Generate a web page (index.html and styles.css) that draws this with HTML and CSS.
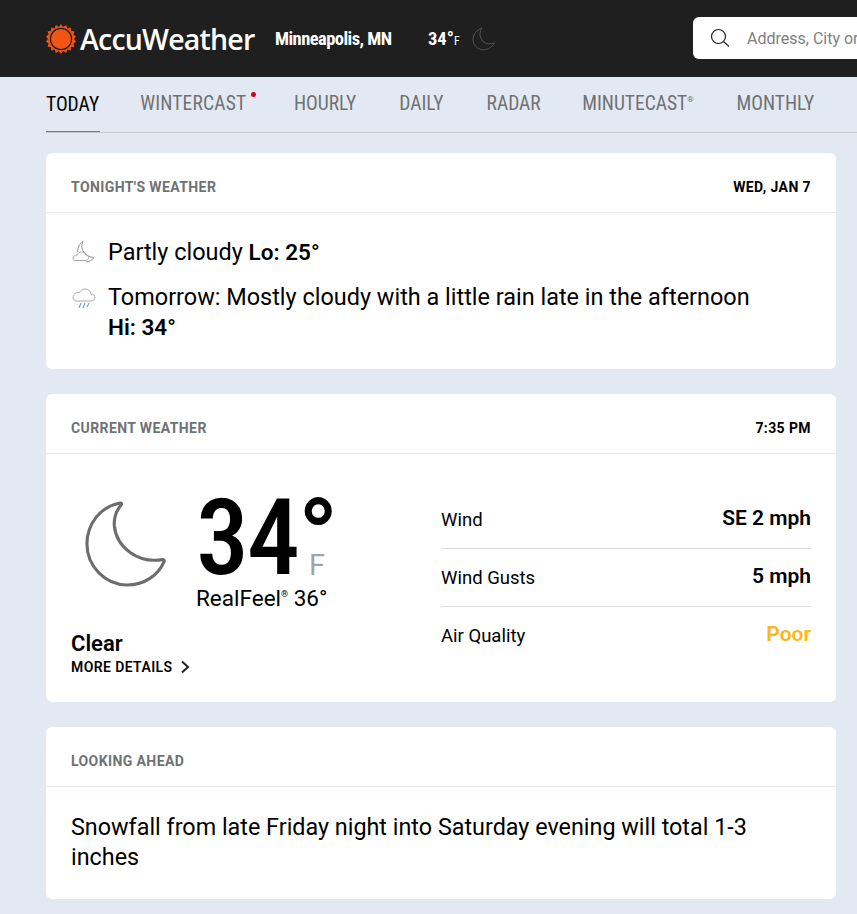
FILE: index.html
```html
<!DOCTYPE html>
<html>

<head>
    <meta charset="utf-8">
    <title>AccuWeather</title>
    <link rel="stylesheet" href="styles.css">
</head>

<body>
    <header class="topBar">
        <div class="logo">
            <svg class="sun" viewBox="0 0 30 30" width="30" height="30">
                <polygon fill="#f05514" points="15,0 17.2,3 20.2,1 21.4,4.4 24.8,3.6 25,7 28.4,7.2 27.4,10.6 30,12.4 28,15 30,17.6 27.4,19.4 28.4,22.8 25,23 24.8,26.4 21.4,25.6 20.2,29 17.2,27 15,30 12.8,27 9.8,29 8.6,25.6 5.2,26.4 5,23 1.6,22.8 2.6,19.4 0,17.6 2,15 0,12.4 2.6,10.6 1.6,7.2 5,7 5.2,3.6 8.6,4.4 9.8,1 12.8,3"/>
                <circle cx="15" cy="15" r="11.2" fill="#1f1f1f"/>
                <circle cx="15" cy="15" r="10" fill="#f05514"/>
            </svg>
            <span class="logoText">AccuWeather</span>
        </div>
        <div class="location">Minneapolis, MN</div>
        <div class="headTemp">34°<span class="headUnit">F</span></div>
        <svg class="headMoon" viewBox="0 0 24 24" width="24" height="24">
            <path d="M10 1C5 2.800 1 7 1 12.400c0 5.800 4.800 10.400 10.600 10.400 4.600 0 8.800-2.800 10.600-7-1.200.8-2.800 1-4.400 1C11.800 16.800 8 12.600 8 7.400c0-2.200.6-4.600 2-6.400z" fill="none" stroke="#555" stroke-width="1"/>
        </svg>
        <div class="search">
            <svg viewBox="0 0 20 20" width="20" height="20">
                <circle cx="8.500" cy="8.500" r="7" fill="none" stroke="#222" stroke-width="1.200"/>
                <path d="M13.500 13.500L19 18.500" stroke="#222" stroke-width="1.200"/>
            </svg>
            <span class="searchText">Address, City or</span>
        </div>
    </header>

    <nav class="tabs">
        <a class="tab tabActive">TODAY</a>
        <a class="tab tabDot">WINTERCAST<span class="redDot"></span></a>
        <a class="tab">HOURLY</a>
        <a class="tab">DAILY</a>
        <a class="tab tabRadar">RADAR</a>
        <a class="tab">MINUTECAST<sup class="tm">®</sup></a>
        <a class="tab">MONTHLY</a>
    </nav>

    <main class="content">
        <section class="card">
            <div class="cardHead">
                <span class="cardTitle">TONIGHT'S WEATHER</span>
                <span class="cardDate">WED, JAN 7</span>
            </div>
            <div class="tonight">
                <div class="tonightRow">
                    <svg class="smallIcon" viewBox="0 0 24 24" width="24" height="24">
                        <path d="M11 .5C7.500 2.500 5.500 6.500 5.800 11M11 .5c-1.800 3.500-1.500 7.500 .8 10.500 2.500 3.200 6 5.400 10 5.600-1.500 2.600-4.500 4.300-7.800 4.300" fill="none" stroke="#8f8f8f" stroke-width="1"/>
                        <path d="M4 19.500h9c2.200 0 3.600-1.300 3.600-2.900 0-1.500-1.300-2.700-3-2.700-.6-1.900-2.200-3-4.100-3-2 0-3.600 1.300-4.100 3.100C3 14 1 15.300 1 17c0 1.500 1.300 2.500 3 2.500z" fill="#fff" stroke="#a5a5a5" stroke-width="1"/>
                    </svg>
                    <p class="tonightText">Partly cloudy <b>Lo: 25°</b></p>
                </div>
                <div class="tonightRow">
                    <svg class="smallIcon" viewBox="0 0 24 24" width="24" height="24">
                        <path d="M5 15h14c2.500 0 4-1.500 4-3.500S21 8 19 8c-.5-3-3-5-6-5-2.500 0-4.500 1.500-5.500 3.500C4 6 1 8.500 1 11.500 1 13.500 2.500 15 5 15z" fill="none" stroke="#aaa" stroke-width="1"/>
                        <path d="M9 17l-2 5M13 17l-2 5M17 17l-2 4" stroke="#4a90d9" stroke-width="1"/>
                    </svg>
                    <p class="tonightText">Tomorrow: Mostly cloudy with a little rain late in the afternoon <b class="hiLine">Hi: 34°</b></p>
                </div>
            </div>
        </section>

        <section class="card">
            <div class="cardHead">
                <span class="cardTitle">CURRENT WEATHER</span>
                <span class="cardDate">7:35 PM</span>
            </div>
            <div class="current">
                <div class="currentLeft">
                    <div class="currentTop">
                        <svg class="bigMoon" viewBox="0 0 84 88" width="82" height="86">
                            <path d="M36 2C15 6 2 24 2 44c0 23 19 42 41 42 18 0 32-10 38-24 .5-1.500-.5-2.500-2-2C55 64 32 48 30 25c-.5-8 2-15 7-21 .8-1.200 .3-2.200-1-2z" fill="none" stroke="#6d6d6d" stroke-width="3.200" stroke-linejoin="round"/>
                        </svg>
                        <div class="tempBox">
                            <div class="bigTemp">34°<span class="bigUnit">F</span></div>
                            <div class="realFeel">RealFeel<sup class="tm2">®</sup> 36°</div>
                        </div>
                    </div>
                    <div class="phrase">Clear</div>
                    <a class="moreDetails">MORE DETAILS
                        <svg viewBox="0 0 10 14" width="10" height="14">
                            <path d="M2 1.500L8 7l-6 5.500" fill="none" stroke="#222" stroke-width="2"/>
                        </svg>
                    </a>
                </div>
                <div class="details">
                    <div class="detailRow"><span>Wind</span><b>SE 2 mph</b></div>
                    <div class="detailRow"><span>Wind Gusts</span><b>5 mph</b></div>
                    <div class="detailRow"><span>Air Quality</span><b class="poor">Poor</b></div>
                </div>
            </div>
        </section>

        <section class="card">
            <div class="cardHead">
                <span class="cardTitle">LOOKING AHEAD</span>
            </div>
            <p class="ahead">Snowfall from late Friday night into Saturday evening will total 1-3 inches</p>
        </section>
    </main>
</body>

</html>
```

FILE: styles.css
```css
html,
body {
    margin: 0;
    padding: 0;
    height: 914px;
    overflow: hidden;
}

body {
    background-color: #e3e9f2;
    color: #000;
    font-family: Roboto, "Liberation Sans", sans-serif;
}

p {
    margin: 0;
}

.topBar {
    display: flex;
    align-items: center;
    height: 77px;
    padding-left: 46px;
    background-color: #1f1f1f;
    color: #fff;
    white-space: nowrap;
}

.logo {
    display: flex;
    align-items: center;
    gap: 4px;
    width: 229px;
}

.logoText {
    font-family: "Open Sans", Roboto, sans-serif;
    font-size: 28.500px;
    font-weight: 600;
    letter-spacing: -0.800px;
}

.location {
    width: 153px;
    font-size: 18.500px;
    font-weight: 700;
    font-stretch: 75%;
    letter-spacing: -0.550px;
}

.headTemp {
    font-size: 18.500px;
    font-weight: 700;
    font-stretch: 75%;
}

.headUnit {
    font-size: 12px;
    font-weight: 400;
}

.headMoon {
    margin-left: 12px;
}

.search {
    display: flex;
    flex: none;
    align-items: center;
    gap: 17px;
    width: 300px;
    height: 42px;
    margin-top: -1px;
    margin-left: auto;
    margin-right: -153px;
    padding-left: 17px;
    border-radius: 6px;
    background-color: #fff;
}

.searchText {
    color: #808080;
    font-size: 16px;
}

.tabs {
    display: flex;
    height: 55px;
    margin: 0 0 0 46px;
    border-bottom: 1px solid #c4c6c9;
    white-space: nowrap;
}

.tab {
    display: flex;
    align-items: center;
    position: relative;
    height: 53px;
    margin-right: 43px;
    color: #6f7275;
    font-size: 19.500px;
    font-stretch: 75%;
}

.tabDot {
    margin-right: 47.500px;
    letter-spacing: 0.200px;
}

.tabRadar {
    margin-right: 41.500px;
}

.tabActive {
    height: 54px;
    margin-right: 40px;
    margin-bottom: -1px;
    padding-right: 1px;
    border-bottom: 1px solid #f05514;
    color: #000;
}

.redDot {
    position: absolute;
    top: 15px;
    right: -10px;
    width: 5px;
    height: 5px;
    border-radius: 50%;
    background-color: #d90012;
}

.tm {
    font-size: 8px;
    margin-top: -8px;
}

.content {
    display: flex;
    flex-direction: column;
    gap: 25px;
    width: 790px;
    margin: 20px 0 0 46px;
}

.card {
    border-radius: 6px;
    background-color: #fff;
}

.cardHead {
    display: flex;
    justify-content: space-between;
    align-items: center;
    height: 60px;
    padding: 8px 25px 0;
    box-sizing: border-box;
    border-bottom: 1px solid #e6ebf3;
}

.cardTitle {
    color: #6f7275;
    font-size: 14px;
    font-weight: 700;
    letter-spacing: 0.400px;
}

.cardDate {
    font-size: 14px;
    font-weight: 700;
    letter-spacing: 0.400px;
}

.tonight {
    display: flex;
    flex-direction: column;
    gap: 15px;
    height: 156px;
    padding: 24px 25px 0;
    box-sizing: border-box;
}

.tonightRow {
    display: flex;
    gap: 13px;
}

.smallIcon {
    flex: none;
    margin-left: 1px;
    margin-right: -1px;
    margin-top: 4px;
}

.tonightText {
    font-size: 23.450px;
    line-height: 30px;
}

.tonightText b {
    font-size: 22.500px;
    font-weight: 600;
}

.hiLine {
    display: block;
}

.current {
    display: flex;
    justify-content: space-between;
    height: 248px;
    padding: 0 25px;
}

.currentLeft {
    padding-top: 36px;
}

.currentTop {
    display: flex;
    gap: 29px;
}

.bigMoon {
    margin-top: 11px;
    margin-left: 14px;
}

.tempBox {
    width: 134px;
}

.bigTemp {
    position: relative;
    font-size: 106px;
    font-stretch: 84%;
    font-weight: 500;
    line-height: 97px;
    letter-spacing: -2px;
    white-space: nowrap;
}

.bigUnit {
    position: absolute;
    left: 113px;
    top: 57px;
    color: #a0a4a8;
    font-size: 29px;
    font-stretch: 100%;
    font-weight: 400;
    line-height: 36px;
    letter-spacing: 0;
}

.realFeel {
    margin-top: -7px;
    font-size: 22.500px;
    line-height: 28px;
    white-space: nowrap;
}

.tm2 {
    font-size: 9px;
}

.phrase {
    margin-top: 18px;
    font-size: 22px;
    font-weight: 600;
    line-height: 28px;
}

.moreDetails {
    display: flex;
    align-items: center;
    gap: 7px;
    margin-top: 1px;
    font-size: 14px;
    font-weight: 600;
    letter-spacing: 0.400px;
}

.details {
    width: 370px;
    padding-top: 37px;
}

.detailRow {
    display: flex;
    justify-content: space-between;
    align-items: center;
    height: 57px;
    border-bottom: 1px solid #dcdcdc;
    font-size: 18.500px;
}

.detailRow:last-child {
    border-bottom: none;
}

.detailRow b {
    margin-bottom: 3px;
    font-size: 21px;
    font-weight: 600;
}

.detailRow .poor {
    color: #fdb50f;
}

.ahead {
    height: 112px;
    padding: 25px 25px 0;
    box-sizing: border-box;
    font-size: 23.350px;
    line-height: 30px;
}
```
